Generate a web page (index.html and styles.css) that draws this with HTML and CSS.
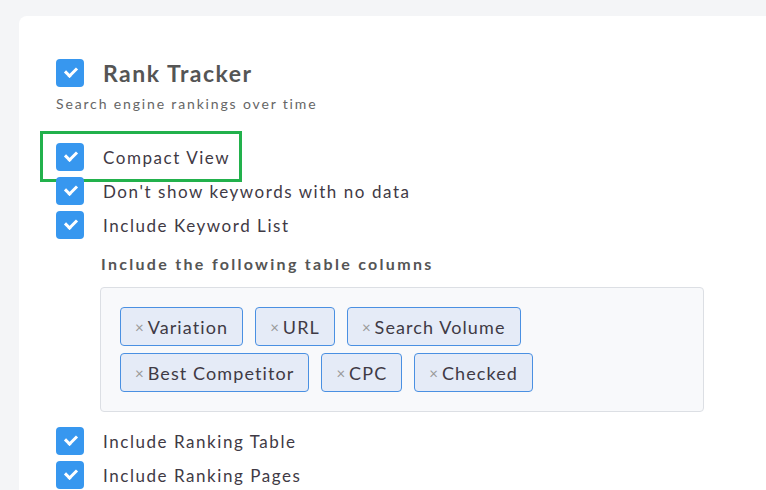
FILE: index.html
```html
<!DOCTYPE html>
<html>
<head>
    <title>Report Settings</title>
    <link rel="stylesheet" href="styles.css">
</head>
<body>
    <div class="card">
        <div class="section-head">
            <span class="check"></span>
            <h2>Rank Tracker</h2>
        </div>
        <p class="subtitle">Search engine rankings over time</p>

        <div class="options">
            <label class="option highlighted"><span class="check"></span>Compact View</label>
            <label class="option"><span class="check"></span>Don't show keywords with no data</label>
            <label class="option"><span class="check"></span>Include Keyword List</label>
        </div>

        <div class="columns">
            <div class="columns-title">Include the following table columns</div>
            <div class="tag-box">
                <span class="tag"><span class="remove">×</span>Variation</span>
                <span class="tag"><span class="remove">×</span>URL</span>
                <span class="tag"><span class="remove">×</span>Search Volume</span>
                <span class="tag"><span class="remove">×</span>Best Competitor</span>
                <span class="tag"><span class="remove">×</span>CPC</span>
                <span class="tag"><span class="remove">×</span>Checked</span>
            </div>
        </div>

        <div class="options">
            <label class="option"><span class="check"></span>Include Ranking Table</label>
            <label class="option"><span class="check"></span>Include Ranking Pages</label>
        </div>
    </div>
</body>
</html>
```

FILE: styles.css
```css
body {
    margin: 0;
    padding: 16px 0 0 19px;
    background-color: #f4f5f7;
    font-family: 'Lato', sans-serif;
    overflow: hidden;
    height: 490px;
    box-sizing: border-box;
}

.card {
    background: white;
    width: 820px;
    min-height: 600px;
    border-radius: 8px;
    padding: 43px 37px;
    box-sizing: border-box;
}

.check {
    flex: none;
    width: 28px;
    height: 28px;
    border-radius: 4px;
    background-color: #3797ef;
    position: relative;
}

.check::after {
    content: '';
    position: absolute;
    left: 9px;
    top: 8px;
    width: 9px;
    height: 5px;
    border-left: 3px solid white;
    border-bottom: 3px solid white;
    transform: rotate(-45deg);
}

.section-head {
    display: flex;
    align-items: center;
    gap: 19px;
}

h2 {
    margin: 0;
    font-size: 23px;
    font-weight: bold;
    color: #555;
    letter-spacing: 1.5px;
}

.subtitle {
    margin: 8px 0 0;
    font-size: 14px;
    line-height: 18px;
    color: #666;
    letter-spacing: 1.85px;
}

.options {
    display: flex;
    flex-direction: column;
    align-items: flex-start;
    gap: 6px;
    margin-top: 30px;
}

.columns + .options {
    margin-top: 15px;
}

.option {
    display: inline-flex;
    align-items: center;
    gap: 19px;
    height: 28px;
    font-size: 17px;
    color: #3f3a45;
    letter-spacing: 1.55px;
    position: relative;
}

.highlighted::before {
    content: '';
    position: absolute;
    left: -16px;
    right: -12px;
    top: -12px;
    bottom: -11px;
    border: 3px solid #22b14c;
}

.columns {
    margin: 15px 0 0 44px;
}

.columns-title {
    font-size: 16px;
    line-height: 20px;
    font-weight: bold;
    color: #555;
    letter-spacing: 2.3px;
    margin-left: 1px;
}

.tag-box {
    width: 604px;
    box-sizing: border-box;
    margin-top: 13px;
    padding: 19px;
    background-color: #f8f9fb;
    border: 1px solid #dcdfe4;
    border-radius: 4px;
    display: flex;
    flex-wrap: wrap;
    gap: 7px 12px;
}

.tag {
    display: inline-flex;
    align-items: center;
    height: 39px;
    box-sizing: border-box;
    padding: 0 14px 0 14px;
    background-color: #e5ebf7;
    border: 1px solid #4a90e2;
    border-radius: 4px;
    font-size: 18px;
    color: #3f3a45;
    letter-spacing: 1.1px;
}

.remove {
    color: #999;
    font-size: 15px;
    margin-right: 4px;
    letter-spacing: 0;
}
```
